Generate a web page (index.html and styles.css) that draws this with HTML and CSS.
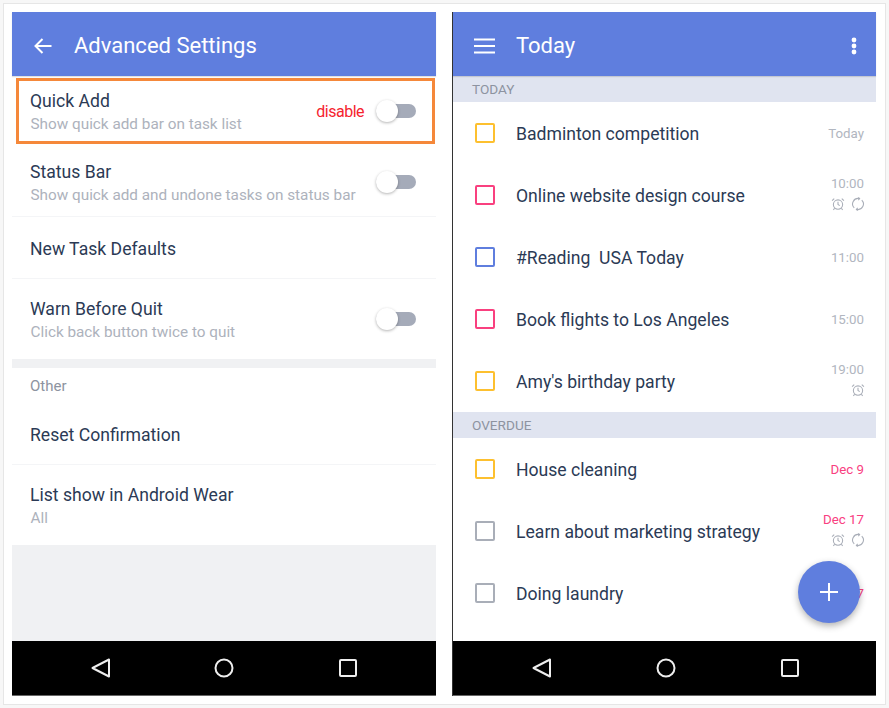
FILE: index.html
```html
<!DOCTYPE html>
<html lang="en">
<head>
    <meta charset="UTF-8">
    <meta name="viewport" content="width=device-width, initial-scale=1.0">
    <title>Advanced Settings / Today</title>
    <link rel="stylesheet" href="styles.css">
</head>
<body>
    <div class="frame">
        <!-- settings screen -->
        <section class="phone">
            <header class="appbar">
                <svg class="bar-icon" width="24" height="24" viewBox="0 0 24 24"><path d="M20.5 12H5M11.5 5 4.5 12l7 7" fill="none" stroke="#fff" stroke-width="2"/></svg>
                <h1 class="settings-title">Advanced Settings</h1>
            </header>
            <div class="content settings">
                <div class="setting quick-add">
                    <div class="setting-text">
                        <h2>Quick Add</h2>
                        <p>Show quick add bar on task list</p>
                    </div>
                    <span class="note">disable</span>
                    <span class="switch"></span>
                </div>
                <div class="setting status-bar">
                    <div class="setting-text">
                        <h2>Status Bar</h2>
                        <p>Show quick add and undone tasks on status bar</p>
                    </div>
                    <span class="switch"></span>
                </div>
                <div class="setting defaults">
                    <div class="setting-text">
                        <h2>New Task Defaults</h2>
                    </div>
                </div>
                <div class="setting warn">
                    <div class="setting-text">
                        <h2>Warn Before Quit</h2>
                        <p>Click back button twice to quit</p>
                    </div>
                    <span class="switch"></span>
                </div>
                <div class="band"></div>
                <div class="group-label">Other</div>
                <div class="setting reset">
                    <div class="setting-text">
                        <h2>Reset Confirmation</h2>
                    </div>
                </div>
                <div class="setting wear">
                    <div class="setting-text">
                        <h2>List show in Android Wear</h2>
                        <p>All</p>
                    </div>
                </div>
                <div class="filler"></div>
            </div>
            <nav class="navbar">
                <svg width="20" height="20" viewBox="0 0 20 20"><path d="M18 1.5v17L1.5 10z" fill="none" stroke="#eee" stroke-width="2" stroke-linejoin="round"/></svg>
                <svg class="nav-home" width="20" height="20" viewBox="0 0 20 20"><circle cx="10" cy="10" r="8.5" fill="none" stroke="#eee" stroke-width="2"/></svg>
                <svg width="18" height="18" viewBox="0 0 18 18"><rect x="1" y="1" width="16" height="16" rx="1" fill="none" stroke="#eee" stroke-width="2"/></svg>
            </nav>
        </section>

        <!-- task list screen -->
        <section class="phone tasks-phone">
            <header class="appbar">
                <svg class="bar-icon" width="24" height="24" viewBox="0 0 24 24"><path d="M2 5.5h21M2 12h21M2 18.500h21" fill="none" stroke="#fff" stroke-width="2"/></svg>
                <h1>Today</h1>
                <svg class="more" width="6" height="18" viewBox="0 0 6 18"><circle cx="3" cy="3" r="2.4" fill="#fff"/><circle cx="3" cy="9" r="2.4" fill="#fff"/><circle cx="3" cy="15" r="2.4" fill="#fff"/></svg>
            </header>
            <div class="content">
                <div class="section-label">TODAY</div>
                <div class="task">
                    <span class="check yellow"></span>
                    <span class="task-name">Badminton competition</span>
                    <div class="task-meta"><span>Today</span></div>
                </div>
                <div class="task">
                    <span class="check pink"></span>
                    <span class="task-name">Online website design course</span>
                    <div class="task-meta">
                        <span>10:00</span>
                        <div class="meta-icons">
                            <svg width="14" height="14" viewBox="0 0 13 13"><use href="#alarm"/></svg>
                            <svg width="14" height="14" viewBox="0 0 13 13"><use href="#repeat"/></svg>
                        </div>
                    </div>
                </div>
                <div class="task">
                    <span class="check blue"></span>
                    <span class="task-name">#Reading&nbsp; USA Today</span>
                    <div class="task-meta"><span>11:00</span></div>
                </div>
                <div class="task">
                    <span class="check pink"></span>
                    <span class="task-name">Book flights to Los Angeles</span>
                    <div class="task-meta"><span>15:00</span></div>
                </div>
                <div class="task">
                    <span class="check yellow"></span>
                    <span class="task-name">Amy's birthday party</span>
                    <div class="task-meta">
                        <span>19:00</span>
                        <div class="meta-icons">
                            <svg width="14" height="14" viewBox="0 0 13 13"><use href="#alarm"/></svg>
                        </div>
                    </div>
                </div>
                <div class="section-label">OVERDUE</div>
                <div class="task">
                    <span class="check yellow"></span>
                    <span class="task-name">House cleaning</span>
                    <div class="task-meta overdue"><span>Dec 9</span></div>
                </div>
                <div class="task">
                    <span class="check grey"></span>
                    <span class="task-name">Learn about marketing strategy</span>
                    <div class="task-meta overdue">
                        <span>Dec 17</span>
                        <div class="meta-icons">
                            <svg width="14" height="14" viewBox="0 0 13 13"><use href="#alarm"/></svg>
                            <svg width="14" height="14" viewBox="0 0 13 13"><use href="#repeat"/></svg>
                        </div>
                    </div>
                </div>
                <div class="task">
                    <span class="check grey"></span>
                    <span class="task-name">Doing laundry</span>
                    <div class="task-meta overdue"><span>Dec 17</span></div>
                </div>
                <button class="fab">
                    <svg width="18" height="18" viewBox="0 0 18 18"><path d="M9 0v18M0 9h18" stroke="#fff" stroke-width="2"/></svg>
                </button>
            </div>
            <nav class="navbar">
                <svg width="20" height="20" viewBox="0 0 20 20"><path d="M18 1.5v17L1.5 10z" fill="none" stroke="#eee" stroke-width="2" stroke-linejoin="round"/></svg>
                <svg class="nav-home" width="20" height="20" viewBox="0 0 20 20"><circle cx="10" cy="10" r="8.5" fill="none" stroke="#eee" stroke-width="2"/></svg>
                <svg width="18" height="18" viewBox="0 0 18 18"><rect x="1" y="1" width="16" height="16" rx="1" fill="none" stroke="#eee" stroke-width="2"/></svg>
            </nav>
        </section>
    </div>

    <svg width="0" height="0" class="defs">
        <symbol id="alarm" viewBox="0 0 13 13">
            <g fill="none" stroke="#a9aeb8" stroke-width="1">
                <circle cx="6.5" cy="7" r="4.300"/>
                <path d="M6.500 4.500V7l1.600 1M1 3.400 3 1.400M12 3.400l-2-2M3.400 10.400l-1.200 1.600M9.600 10.400l1.200 1.600"/>
            </g>
        </symbol>
        <symbol id="repeat" viewBox="0 0 13 13">
            <g fill="none" stroke="#a9aeb8" stroke-width="1">
                <path d="M3 10.200A5.200 5.200 0 0 1 7.600 1.400M10 2.800A5.200 5.200 0 0 1 5.400 11.600"/>
                <path d="M6.800 .4 8 1.500 6.800 2.800M6.200 10.200 5 11.500l1.200 1.100"/>
            </g>
        </symbol>
    </svg>
</body>
</html>
```

FILE: styles.css
```css
* {
    box-sizing: border-box;
    margin: 0;
    padding: 0;
}

body {
    font-family: Roboto, "Liberation Sans", sans-serif;
    background-color: #f7f7f7;
    padding: 3px;
    height: 708px;
    overflow: hidden;
}

.defs {
    display: block;
    height: 0;
}

.frame {
    width: 883px;
    height: 702px;
    background-color: #fff;
    border: 1px solid #e6e6e6;
    padding: 8px;
    display: flex;
    gap: 17px;
}

.phone {
    width: 424px;
    height: 684px;
    display: flex;
    flex-direction: column;
    background-color: #fff;
}

.tasks-phone {
    width: 423px;
    box-shadow: -1px 0 0 #333;
}

.appbar {
    position: relative;
    z-index: 1;
    height: 64px;
    background-color: #5f7ede;
    box-shadow: 0 1px 1px rgba(0, 0, 0, 0.12);
    color: #fff;
    display: flex;
    align-items: center;
    padding: 3px 19px 0;
    flex-shrink: 0;
}

.appbar h1 {
    font-size: 22px;
    font-weight: 400;
    margin-left: 20px;
    flex: 1;
}

.appbar .settings-title {
    margin-left: 19px;
}

.content {
    flex: 1;
    position: relative;
    display: flex;
    flex-direction: column;
    overflow: hidden;
}

.setting {
    display: flex;
    align-items: center;
    padding: 0 20px 0 18px;
    border-bottom: 1px solid #f4f5f7;
}

.setting-text {
    flex: 1;
}

.setting h2 {
    font-size: 17.6px;
    font-weight: 400;
    color: #2b3a55;
    line-height: 20px;
    padding-top: 2px;
}

.setting p {
    font-size: 15.3px;
    color: #adb2bc;
    line-height: 18px;
    margin-top: 4px;
    margin-left: 0.5px;
}

.quick-add {
    height: 66px;
    margin: 2px 1px 2px 4px;
    padding: 0 16px 0 11px;
    border: 3px solid #f5883a;
}

.status-bar {
    height: 71px;
    padding-top: 2px;
}

.defaults {
    height: 62px;
}

.warn {
    height: 80px;
    border-bottom: 0;
}

.reset {
    height: 61px;
}

.wear {
    height: 80px;
    border-bottom: 0;
}

.note {
    color: #f5232e;
    font-size: 16px;
    letter-spacing: -0.5px;
    margin-right: 12px;
}

.switch {
    position: relative;
    width: 40px;
    height: 14px;
    border-radius: 7px;
    background-color: #a5abb9;
}

.switch::before {
    content: "";
    position: absolute;
    left: 0;
    top: -4px;
    width: 22px;
    height: 22px;
    border-radius: 50%;
    background-color: #fff;
    box-shadow: 0 1px 3px rgba(0, 0, 0, 0.3);
}

.band {
    height: 9px;
    background-color: #f0f1f3;
}

.group-label {
    height: 36px;
    line-height: 36px;
    padding-left: 18px;
    font-size: 15px;
    color: #8d93a0;
}

.filler {
    flex: 1;
    background-color: #f0f1f3;
}

.navbar {
    height: 55px;
    flex-shrink: 0;
    background-color: #000;
    border-bottom: 1px solid #666;
    display: flex;
    align-items: center;
    justify-content: space-between;
    padding: 0 79px;
}

.nav-home {
    margin-left: -2px;
}

.tasks-phone .navbar {
    padding-right: 77px;
}

.section-label {
    height: 26px;
    line-height: 27px;
    padding-left: 19px;
    background-color: #e0e4f0;
    font-size: 13.6px;
    color: #8d93a0;
}

.task {
    height: 62px;
    flex-shrink: 0;
    display: flex;
    align-items: center;
    padding: 0 12px 0 22px;
}

.check {
    width: 20px;
    height: 20px;
    border: 2px solid #a9aeb8;
    border-radius: 2px;
    margin-right: 21px;
}

.check.yellow {
    border-color: #fdc02f;
}

.check.pink {
    border-color: #f9407f;
}

.check.blue {
    border-color: #5f7ede;
}

.check.grey {
    border-color: #a9aeb8;
}

.task-name {
    flex: 1;
    font-size: 17.6px;
    color: #2b3a55;
    padding-top: 2px;
}

.task-meta {
    font-size: 13.3px;
    color: #b1b6c0;
    text-align: right;
}

.task-meta.overdue {
    color: #f9407f;
}

.meta-icons {
    display: flex;
    justify-content: flex-end;
    gap: 6px;
    margin: 6px -1px 4px 0;
}

.fab {
    position: absolute;
    right: 16px;
    top: 485px;
    width: 62px;
    height: 62px;
    border: none;
    border-radius: 50%;
    background-color: #5f7ede;
    box-shadow: 0 3px 7px rgba(0, 0, 0, 0.3);
    display: flex;
    align-items: center;
    justify-content: center;
}
```
